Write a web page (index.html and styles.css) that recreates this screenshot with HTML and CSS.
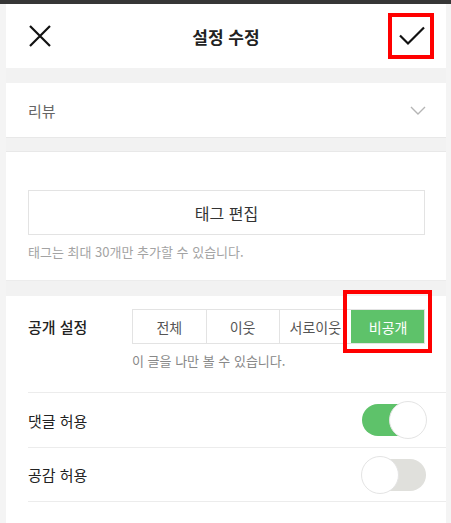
FILE: index.html
```html
<!DOCTYPE html>
<html lang="ko">
<head>
<meta charset="utf-8">
<link rel="stylesheet" href="styles.css">
</head>
<body>
<div class="topbar"></div>
<div class="page">
  <header class="header">
    <button class="icon-btn close" aria-label="닫기">
      <svg width="22" height="22" viewBox="0 0 22 22"><path d="M1 1 L21 21 M21 1 L1 21" stroke="#111" stroke-width="2.2" fill="none"/></svg>
    </button>
    <h1 class="title">설정 수정</h1>
    <button class="icon-btn check" aria-label="완료">
      <svg width="26" height="20" viewBox="0 0 26 20"><path d="M1 9.5 L9 17.5 L25 1.5" stroke="#111" stroke-width="2.2" fill="none"/></svg>
    </button>
  </header>
  <div class="gap"></div>
  <div class="select-row">
    <span class="select-value">리뷰</span>
    <svg class="chevron" width="16" height="9" viewBox="0 0 16 9"><path d="M1 1 L8 8 L15 1" stroke="#b5b5b5" stroke-width="1.4" fill="none"/></svg>
  </div>
  <div class="gap gap-line"></div>
  <section class="tag-section">
    <button class="tag-btn">태그 편집</button>
    <p class="hint">태그는 최대 30개만 추가할 수 있습니다.</p>
  </section>
  <div class="gap gap-top"></div>
  <section class="visibility">
    <div class="vis-row">
      <span class="label strong">공개 설정</span>
      <div class="segments">
        <span class="seg">전체</span>
        <span class="seg">이웃</span>
        <span class="seg">서로이웃</span>
        <span class="seg active">비공개</span>
      </div>
    </div>
    <p class="vis-hint">이 글을 나만 볼 수 있습니다.</p>
  </section>
  <div class="toggles">
    <div class="toggle-row">
      <span class="label">댓글 허용</span>
      <span class="switch on"><span class="knob"></span></span>
    </div>
    <div class="toggle-row">
      <span class="label">공감 허용</span>
      <span class="switch"><span class="knob"></span></span>
    </div>
  </div>
</div>
<div class="mark mark-check"></div>
<div class="mark mark-private"></div>
</body>
</html>
```
FILE: styles.css
```css
* { box-sizing: border-box; }
html, body { margin: 0; padding: 0; }
body {
  background: #f4f4f4;
  font-family: "Noto Sans CJK KR", "Noto Sans", sans-serif;
  color: #222;
  position: relative;
  height: 523px;
  overflow: hidden;
}
.topbar { height: 4px; background: #363636; }
.page {
  margin: 0 5px 0 6px;
  background: #fff;
  min-height: 519px;
}
.header {
  height: 64px;
  display: flex;
  align-items: center;
  justify-content: space-between;
  padding: 0 18px 0 18px;
}
.icon-btn {
  border: 0; background: none; padding: 0;
  width: 32px; height: 32px;
  display: flex; align-items: center; justify-content: center;
}
.title {
  margin: 0;
  font-size: 17px;
  font-weight: 700;
  color: #222;
}
.gap { height: 15px; background: #f2f2f2; }
.gap-line { border-top: 1px solid #e8e8e8; border-bottom: 1px solid #e8e8e8; }
.gap-top { border-top: 1px solid #ececec; height: 16px; }
.select-row {
  height: 54px;
  display: flex;
  align-items: center;
  justify-content: space-between;
  padding: 0 20px 0 22px;
}
.select-value { font-size: 15px; color: #666; }
.tag-section { padding: 38px 21px 19px 22px; }
.tag-btn {
  display: block;
  width: 100%;
  height: 45px;
  border: 1px solid #e3e3e3;
  background: #fff;
  font-family: inherit;
  font-size: 16px;
  color: #333;
}
.hint { margin: 7px 0 0; font-size: 13px; color: #a3a3a3; }
.visibility { padding: 13px 21px 22px 22px; }
.vis-row { display: flex; align-items: center; }
.label { font-size: 15px; color: #222; }
.strong { font-weight: 500; width: 104px; }
.segments {
  flex: 1;
  display: grid;
  grid-template-columns: repeat(4, 1fr);
  border: 1px solid #e3e3e3;
  height: 35px;
}
.seg {
  display: flex; align-items: center; justify-content: center;
  font-size: 14px; color: #555;
  border-left: 1px solid #e3e3e3;
}
.seg:first-child { border-left: 0; }
.seg.active { background: #5ec26a; color: #fff; border-left-color: #5ec26a; }
.vis-hint { margin: 7px 0 0 104px; font-size: 13px; color: #888; }
.toggles { padding-left: 22px; }
.toggle-row {
  height: 55px;
  display: flex;
  align-items: center;
  justify-content: space-between;
  padding-right: 20px;
  border-top: 1px solid #ececec;
}
.toggle-row:last-child { border-bottom: 1px solid #ececec; }
.switch {
  position: relative;
  width: 64px; height: 32px;
  border-radius: 16px;
  background: #e0e0dc;
}
.switch.on { background: #5ec26a; }
.knob {
  position: absolute;
  top: -3px; left: -1px;
  width: 38px; height: 38px;
  border-radius: 50%;
  background: #fff;
  border: 1px solid #e4e4e4;
}
.switch.on .knob { left: auto; right: -1px; }
.mark {
  position: absolute;
  border: 4px solid #f00;
}
.mark-check { left: 388px; top: 13px; width: 46px; height: 46px; }
.mark-private { left: 343px; top: 290px; width: 89px; height: 63px; }
```
